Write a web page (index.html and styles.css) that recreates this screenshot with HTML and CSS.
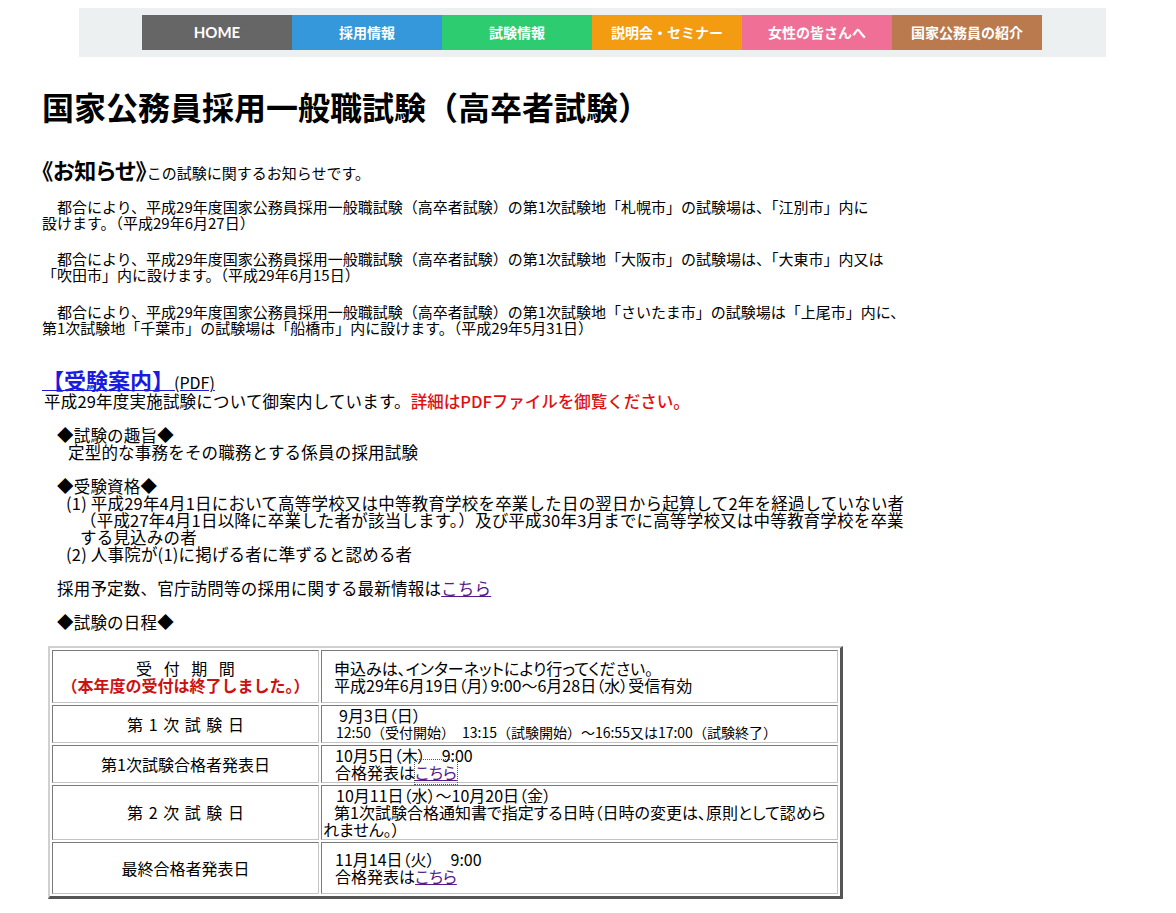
FILE: index.html
```html
<!DOCTYPE html>
<html lang="ja">
<head>
<meta charset="utf-8">
<title>国家公務員採用一般職試験（高卒者試験）</title>
<link rel="stylesheet" href="styles.css">
</head>
<body>
<nav class="band">
  <ul class="menu">
    <li class="item home">HOME</li>
    <li class="item blue">採用情報</li>
    <li class="item green">試験情報</li>
    <li class="item orange">説明会・セミナー</li>
    <li class="item pink">女性の皆さんへ</li>
    <li class="item brown">国家公務員の紹介</li>
  </ul>
</nav>
<main class="content">
  <h1 class="title">国家公務員採用一般職試験（高卒者試験）</h1>
  <p class="notice-head"><span class="notice-label">《お知らせ》</span>この試験に関するお知らせです。</p>
  <p class="notice n1">　都合により、平成29年度国家公務員採用一般職試験（高卒者試験）の第1次試験地「札幌市」の試験場は、「江別市」内に<br>設けます。（平成29年6月27日）</p>
  <p class="notice n2">　都合により、平成29年度国家公務員採用一般職試験（高卒者試験）の第1次試験地「大阪市」の試験場は、「大東市」内又は<br>「吹田市」内に設けます。（平成29年6月15日）</p>
  <p class="notice n3">　都合により、平成29年度国家公務員採用一般職試験（高卒者試験）の第1次試験地「さいたま市」の試験場は「上尾市」内に、<br>第1次試験地「千葉市」の試験場は「船橋市」内に設けます。（平成29年5月31日）</p>

  <div class="guide"><a class="guide-link" href="#"><span class="guide-name">【受験案内】</span><span class="pdf">(PDF)</span></a></div>
  <div class="sec">
    <div class="ln l0">平成29年度実施試験について御案内しています。<span class="red">詳細はPDFファイルを御覧ください。</span></div>
    <div class="ln blank"></div>
    <div class="ln l1">◆試験の趣旨◆</div>
    <div class="ln l2">定型的な事務をその職務とする係員の採用試験</div>
    <div class="ln blank"></div>
    <div class="ln l1">◆受験資格◆</div>
    <div class="ln l3">(1) 平成29年4月1日において高等学校又は中等教育学校を卒業した日の翌日から起算して2年を経過していない者</div>
    <div class="ln l5">（平成27年4月1日以降に卒業した者が該当します。）及び平成30年3月までに高等学校又は中等教育学校を卒業</div>
    <div class="ln l4">する見込みの者</div>
    <div class="ln l3">(2) 人事院が(1)に掲げる者に準ずると認める者</div>
    <div class="ln blank"></div>
    <div class="ln l1">採用予定数、官庁訪問等の採用に関する最新情報は<a class="visited" href="#">こちら</a></div>
    <div class="ln blank"></div>
    <div class="ln l1">◆試験の日程◆</div>
  </div>

  <table class="schedule">
    <tr class="r1">
      <td class="label"><span class="sp-wide">受 付 期 間</span><br><span class="closed">（本年度の受付は終了しました。）</span></td>
      <td class="info"><div class="i12">申込みは、インターネットにより行ってください。</div><div class="i12">平成29年6月19日（月）9:00～6月28日（水）受信有効</div></td>
    </tr>
    <tr class="r2">
      <td class="label sp">第 1 次 試 験 日</td>
      <td class="info"><div class="i17">9月3日（日）</div><div class="i14 small">12:50（受付開始）　13:15（試験開始）～16:55又は17:00（試験終了）</div></td>
    </tr>
    <tr class="r3">
      <td class="label">第1次試験合格者発表日</td>
      <td class="info"><div class="i13">10月5日（木）　9:00</div><div class="i13">合格発表は<a class="visited focus" href="#">こちら</a></div></td>
    </tr>
    <tr class="r4">
      <td class="label sp">第 2 次 試 験 日</td>
      <td class="info"><div class="i14">10月11日（水）～10月20日（金）</div><div class="wrapline">第1次試験合格通知書で指定する日時（日時の変更は、原則として認めら<br>れません。）</div></td>
    </tr>
    <tr class="r5">
      <td class="label">最終合格者発表日</td>
      <td class="info"><div class="i13">11月14日（火）　9:00</div><div class="i13">合格発表は<a class="visited" href="#">こちら</a></div></td>
    </tr>
  </table>
</main>
</body>
</html>
```

FILE: styles.css
```css
html, body {
  background: #ffffff;
}
body {
  margin: 8px;
  font-family: "Noto Sans CJK JP", "Noto Sans", sans-serif;
  color: #000;
}

/* navigation band */
.band {
  margin-left: 71px;
  width: 1027px;
  background: #ecf0f1;
  padding: 7px 0;
}
.menu {
  list-style: none;
  margin: 0 0 0 63px;
  padding: 0;
  display: flex;
}
.item {
  width: 150px;
  height: 35px;
  line-height: 35px;
  text-align: center;
  color: #fff;
  font-weight: bold;
  font-size: 14px;
  font-family: "Noto Sans CJK JP", sans-serif;
}
.item.home { background: #666666; font-family: "Lato", "Open Sans", sans-serif; font-size: 15px; }
.item.blue { background: #3498db; }
.item.green { background: #2ecc71; }
.item.orange { background: #f39c12; }
.item.pink { background: #f06f97; }
.item.brown { background: #bb7a4d; }

/* content */
.content {
  padding-left: 34px;
}
.title {
  margin: 29px 0 0;
  font-size: 32px;
  line-height: 40px;
  font-weight: bold;
}
.notice-head {
  margin: 31px 0 0;
  font-size: 15px;
  line-height: 24px;
}
.notice-label {
  font-size: 22px;
  font-weight: bold;
  font-feature-settings: "palt";
}
.notice {
  margin: 0;
  font-size: 15px;
  line-height: 16px;
}
.notice.n1 { margin-top: 14px; }
.notice.n2 { margin-top: 20px; }
.notice.n3 { margin-top: 21px; }

.guide {
  margin-top: 33px;
  line-height: 21px;
}
.guide-link {
  color: #1a1ae0;
  text-decoration: underline;
  text-decoration-color: #1a1ae0;
}
.guide-name {
  font-size: 22px;
  font-weight: bold;
}
.pdf {
  font-size: 16px;
  color: #000;
}

.sec {
  font-size: 16.5px;
  letter-spacing: 0.2px;
}
.ln {
  line-height: 17px;
  height: 17px;
  white-space: nowrap;
}
.l0 { padding-left: 2px; }
.l1 { padding-left: 15px; }
.l2 { padding-left: 26px; }
.l3 { padding-left: 24px; }
.l4 { padding-left: 38px; }
.l5 { padding-left: 38px; }
.red {
  color: #e01010;
  font-weight: 500;
  letter-spacing: 0;
}
a.visited {
  color: #551a8b;
  text-decoration: underline;
}
a.focus {
  outline: 1px dotted #555;
}

/* schedule table */
.schedule {
  margin: 15px 0 0 6px;
  width: 795px;
  table-layout: fixed;
  border-collapse: separate;
  border-spacing: 2px;
  border-style: solid;
  border-width: 2px 3px 3px 2px;
  border-color: #d0d0d0 #555 #555 #d0d0d0;
  font-size: 16px;
}
.schedule td {
  box-sizing: border-box;
  border: 1px solid;
  border-color: #7a7a7a #c4c4c4 #c4c4c4 #7a7a7a;
  padding: 1px;
  line-height: 17px;
  vertical-align: middle;
}
.schedule td.label {
  width: 267px;
  text-align: center;
}
.schedule td.info {
  font-feature-settings: "palt";
}
.sp-wide { word-spacing: 8px; }
.sp { word-spacing: 2px; }
.closed {
  color: #cc1111;
  font-weight: bold;
}
.r1 td { height: 53px; }
.r2 td { height: 38px; }
.r3 td { height: 37px; }
.r4 td { height: 54px; }
.r5 td { height: 52px; }
.i12 { padding-left: 11px; }
.i13 { padding-left: 12px; }
.i14 { padding-left: 13px; }
.i17 { padding-left: 16px; }
.small { font-size: 14px; font-feature-settings: normal; }
.wrapline { text-indent: 11px; }
```
